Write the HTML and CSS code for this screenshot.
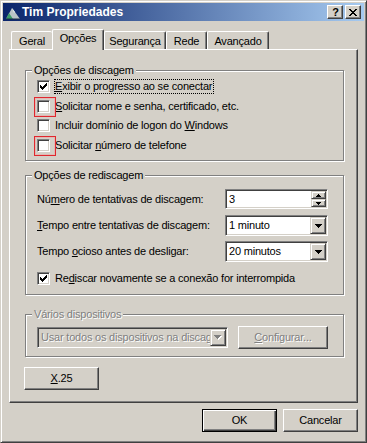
FILE: index.html
```html
<!DOCTYPE html>
<html lang="pt-BR">
<head>
    <meta charset="UTF-8">
    <title>Tim Propriedades</title>
    <link rel="stylesheet" href="styles.css">
</head>
<body>
    <div class="window">
        <div class="titlebar">
            <svg class="app-icon" width="16" height="16" viewBox="0 0 16 16">
                <path d="M1 15 L7 4 L10 8 L15 15 Z" fill="#b9c3c6"/>
                <path d="M7 4 L10 8 L9 9 Z" fill="#e8eef0"/>
                <path d="M1 15 L4 9 L8 15 Z" fill="#3c9c68"/>
                <path d="M1 15 H15" stroke="#1c2c48" stroke-width="1"/>
            </svg>
            <span class="title">Tim Propriedades</span>
            <div class="caption-buttons">
                <div class="caption-btn caption-help">?</div>
                <div class="caption-btn">
                    <svg width="8" height="7" viewBox="0 0 8 7" shape-rendering="crispEdges">
                        <path d="M0 0h2v1h-2zM6 0h2v1h-2zM1 1h2v1h-2zM5 1h2v1h-2zM2 2h4v1h-4zM3 3h2v1h-2zM2 4h4v1h-4zM1 5h2v1h-2zM5 5h2v1h-2zM0 6h2v1h-2zM6 6h2v1h-2z" fill="#000"/>
                    </svg>
                </div>
            </div>
        </div>

        <div class="dialog">
            <!-- abas -->
            <div class="tabs">
                <div class="tab tab-geral">Geral</div>
                <div class="tab tab-active">Opções</div>
                <div class="tab tab-seg">Segurança</div>
                <div class="tab tab-rede">Rede</div>
                <div class="tab tab-avanc">Avançado</div>
            </div>

            <div class="panel">
                <div class="group group-discagem">
                    <div class="group-title">Opções de discagem</div>
                    <div class="check-row">
                        <span class="checkbox">
                            <svg width="7" height="7" viewBox="0 0 7 7" shape-rendering="crispEdges"><path d="M6 0h1v1h-1zM5 1h2v1h-2zM0 2h1v1h-1zM4 2h3v1h-3zM0 3h2v1h-2zM3 3h3v1h-3zM0 4h5v1h-5zM1 5h3v1h-3zM2 6h1v1h-1z" fill="#000"/></svg>
                        </span>
                        <span class="check-label focused"><u>E</u>xibir o progresso ao se conectar</span>
                    </div>
                    <div class="check-row">
                        <span class="checkbox flagged"></span>
                        <span class="check-label"><u>S</u>olicitar nome e senha, certificado, etc.</span>
                    </div>
                    <div class="check-row">
                        <span class="checkbox"></span>
                        <span class="check-label">Incluir domínio de logon do <u>W</u>indows</span>
                    </div>
                    <div class="check-row">
                        <span class="checkbox flagged"></span>
                        <span class="check-label">Solicitar <u>n</u>úmero de telefone</span>
                    </div>
                </div>

                <div class="group group-rediscagem">
                    <div class="group-title">Opções de rediscagem</div>
                    <div class="field-row row-spin">
                        <span>Nú<u>m</u>ero de tentativas de discagem:</span>
                        <div class="spin sunken">
                            <span class="field-value">3</span>
                            <div class="spin-buttons">
                                <div class="spin-btn">
                                    <svg width="5" height="3" viewBox="0 0 5 3" shape-rendering="crispEdges"><path d="M2 0h1v1h-1zM1 1h3v1h-3zM0 2h5v1h-5z" fill="#000"/></svg>
                                </div>
                                <div class="spin-btn">
                                    <svg width="5" height="3" viewBox="0 0 5 3" shape-rendering="crispEdges"><path d="M0 0h5v1h-5zM1 1h3v1h-3zM2 2h1v1h-1z" fill="#000"/></svg>
                                </div>
                            </div>
                        </div>
                    </div>
                    <div class="field-row row-combo1">
                        <span><u>T</u>empo entre tentativas de discagem:</span>
                        <div class="combo sunken">
                            <span class="field-value">1 minuto</span>
                            <div class="drop-btn">
                                <svg width="7" height="4" viewBox="0 0 7 4" shape-rendering="crispEdges"><path d="M0 0h7v1h-7zM1 1h5v1h-5zM2 2h3v1h-3zM3 3h1v1h-1z" fill="#000"/></svg>
                            </div>
                        </div>
                    </div>
                    <div class="field-row row-combo2">
                        <span>Tempo <u>o</u>cioso antes de desligar:</span>
                        <div class="combo sunken">
                            <span class="field-value">20 minutos</span>
                            <div class="drop-btn">
                                <svg width="7" height="4" viewBox="0 0 7 4" shape-rendering="crispEdges"><path d="M0 0h7v1h-7zM1 1h5v1h-5zM2 2h3v1h-3zM3 3h1v1h-1z" fill="#000"/></svg>
                            </div>
                        </div>
                    </div>
                    <div class="check-row row-redial">
                        <span class="checkbox">
                            <svg width="7" height="7" viewBox="0 0 7 7" shape-rendering="crispEdges"><path d="M6 0h1v1h-1zM5 1h2v1h-2zM0 2h1v1h-1zM4 2h3v1h-3zM0 3h2v1h-2zM3 3h3v1h-3zM0 4h5v1h-5zM1 5h3v1h-3zM2 6h1v1h-1z" fill="#000"/></svg>
                        </span>
                        <span class="check-label">Re<u>d</u>iscar novamente se a conexão for interrompida</span>
                    </div>
                </div>

                <div class="group group-devices">
                    <div class="group-title disabled">Vários dispositivos</div>
                    <div class="device-row">
                        <div class="combo combo-disabled sunken">
                            <span class="field-value disabled">Usar todos os dispositivos na discag</span>
                            <div class="drop-btn">
                                <svg width="8" height="5" viewBox="0 0 8 5" shape-rendering="crispEdges">
                                    <path d="M1 1h7v1h-7zM2 2h5v1h-5zM3 3h3v1h-3zM4 4h1v1h-1z" fill="#fff"/>
                                    <path d="M0 0h7v1h-7zM1 1h5v1h-5zM2 2h3v1h-3zM3 3h1v1h-1z" fill="#808080"/>
                                </svg>
                            </div>
                        </div>
                        <div class="btn btn-config disabled"><u>C</u>onfigurar...</div>
                    </div>
                </div>

                <div class="btn btn-x25"><u>X</u>.25</div>
            </div>

            <div class="dialog-buttons">
                <div class="btn btn-default">OK</div>
                <div class="btn">Cancelar</div>
            </div>
        </div>
    </div>
</body>
</html>
```

FILE: styles.css
```css
* {
    box-sizing: border-box;
}
html, body {
    margin: 0;
}
body {
    background: #d4d0c8;
    font-family: "Liberation Sans", Arial, sans-serif;
    font-size: 11px;
    line-height: 13px;
    letter-spacing: -0.2px;
    color: #000;
}
u {
    text-decoration-thickness: 1px;
    text-underline-offset: 1px;
}

/* janela */
.window {
    width: 367px;
    height: 443px;
    border: 1px solid;
    border-color: #d4d0c8 #404040 #404040 #d4d0c8;
    box-shadow: inset 1px 1px #fff, inset -1px -1px #808080;
    padding: 2px;
    display: flex;
    flex-direction: column;
}
.titlebar {
    height: 18px;
    background: linear-gradient(to right, #0a246a, #a6caf0);
    display: flex;
    align-items: center;
    padding: 0 3px 0 2px;
}
.app-icon {
    margin-right: 1px;
}
.title {
    color: #fff;
    font-weight: bold;
    font-size: 12px;
    letter-spacing: 0;
}
.caption-buttons {
    margin-left: auto;
    display: flex;
    gap: 2px;
}
.caption-btn {
    width: 16px;
    height: 14px;
    background: #d4d0c8;
    border: 1px solid;
    border-color: #fff #404040 #404040 #fff;
    box-shadow: inset -1px -1px #808080;
    display: flex;
    align-items: center;
    justify-content: center;
    font-weight: bold;
    font-size: 11px;
    line-height: 11px;
}
.caption-help {
    padding-left: 1px;
}

.dialog {
    flex: 1;
    padding: 8px 6px 0 6px;
}

/* abas */
.tabs {
    display: flex;
    align-items: flex-end;
    height: 20px;
    padding-left: 2px;
}
.tab {
    height: 18px;
    border: 1px solid;
    border-bottom: none;
    border-color: #fff #404040 #fff #fff;
    box-shadow: inset -1px 0 #808080;
    border-radius: 2px 2px 0 0;
    display: flex;
    align-items: center;
    justify-content: center;
    padding-top: 1px;
}
.tab-geral {
    width: 41px;
    border-right: none;
    box-shadow: none;
}
.tab-active {
    width: 52px;
    height: 21px;
    margin-bottom: -1px;
    position: relative;
    background: #d4d0c8;
    padding-top: 0;
    padding-bottom: 3px;
}
.tab-seg {
    width: 62px;
}
.tab-rede {
    width: 41px;
}
.tab-avanc {
    width: 62px;
}

.panel {
    height: 354px;
    border: 1px solid;
    border-color: #fff #404040 #404040 #fff;
    box-shadow: inset -1px -1px #808080;
    padding: 0 13px 0 15px;
}

/* grupos */
.group {
    border: 1px solid #808080;
    box-shadow: 1px 1px #fff, inset 1px 1px #fff;
}
.group-title {
    width: fit-content;
    margin: -7px 0 0 6px;
    padding: 0 2px;
    background: #d4d0c8;
}
.group-discagem {
    margin-top: 20px;
    padding-bottom: 5px;
}
.group-rediscagem {
    margin-top: 14px;
    padding-bottom: 5px;
}
.group-devices {
    margin-top: 19px;
    padding-bottom: 7px;
}

.check-row {
    display: flex;
    align-items: center;
    height: 19.5px;
    padding-left: 11px;
}
.checkbox {
    position: relative;
    width: 13px;
    height: 13px;
    background: #fff;
    border: 1px solid;
    border-color: #808080 #fff #fff #808080;
    box-shadow: inset 1px 1px #404040, inset -1px -1px #d4d0c8;
    display: flex;
    align-items: center;
    justify-content: center;
    margin-right: 4px;
}
.checkbox.flagged::after {
    content: "";
    position: absolute;
    left: -4px;
    top: -4px;
    width: 20px;
    height: 18px;
    border: 1px solid #e0282e;
    box-shadow: inset 0 0 0 1px rgba(240, 160, 160, 0.5);
}
.check-label {
    border: 1px dotted transparent;
    padding-right: 1px;
}
.check-label.focused {
    border-color: #000;
}

.field-row {
    display: flex;
    align-items: center;
    justify-content: space-between;
    padding: 0 15px 0 11px;
}
.row-spin {
    margin-top: 7px;
    height: 20px;
}
.row-combo1 {
    margin-top: 6px;
    height: 21px;
}
.row-combo2 {
    margin-top: 5px;
    height: 21px;
}
.row-redial {
    margin-top: 7px;
}

.sunken {
    background: #fff;
    border: 1px solid;
    border-color: #808080 #fff #fff #808080;
    box-shadow: inset 1px 1px #404040, inset -1px -1px #d4d0c8;
    padding: 1px;
    display: flex;
}
.spin {
    width: 103px;
    height: 20px;
}
.combo {
    width: 103px;
    height: 21px;
}
.field-value {
    flex: 1;
    padding-left: 2px;
    line-height: 17px;
    white-space: nowrap;
    overflow: hidden;
}
.spin .field-value {
    line-height: 16px;
}
.spin-buttons {
    width: 15px;
    display: flex;
    flex-direction: column;
}
.spin-btn,
.drop-btn {
    background: #d4d0c8;
    border: 1px solid;
    border-color: #d4d0c8 #404040 #404040 #d4d0c8;
    box-shadow: inset 1px 1px #fff, inset -1px -1px #808080;
    display: flex;
    align-items: center;
    justify-content: center;
}
.spin-btn {
    height: 8px;
}
.drop-btn {
    width: 16px;
    flex-shrink: 0;
}

.device-row {
    display: flex;
    align-items: center;
    height: 23px;
    margin-top: 5px;
    padding-left: 11px;
}
.combo-disabled {
    width: 191px;
    background: #d4d0c8;
}

.disabled {
    color: #808080;
    text-shadow: 1px 1px #fff;
}

/* botões */
.btn {
    width: 75px;
    height: 23px;
    background: #d4d0c8;
    border: 1px solid;
    border-color: #fff #404040 #404040 #fff;
    box-shadow: inset -1px -1px #808080;
    display: flex;
    align-items: center;
    justify-content: center;
}
.btn-config {
    width: 90px;
    margin-left: 10px;
}
.btn-x25 {
    margin-top: 10px;
    margin-left: -1px;
}
.btn-default {
    border-color: #000;
    box-shadow: inset 1px 1px #fff, inset -1px -1px #404040, inset -2px -2px #808080;
}
.dialog-buttons {
    display: flex;
    justify-content: flex-end;
    gap: 6px;
    padding-top: 6px;
}
```
